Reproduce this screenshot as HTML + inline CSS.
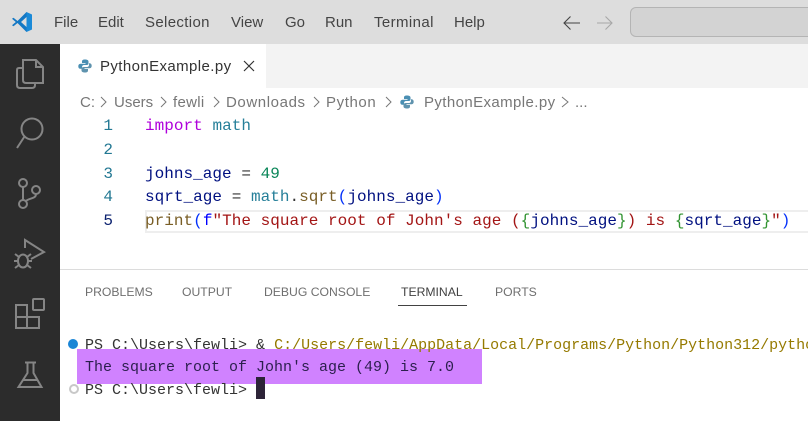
<!DOCTYPE html>
<html>
<head>
<meta charset="utf-8">
<style>
html,body{margin:0;padding:0;width:808px;height:421px;overflow:hidden;background:#fff}
div{position:absolute;white-space:pre}
.m{top:14px;font:15px/18px "Liberation Sans",sans-serif;color:#444}
.b{top:94px;font:15px/18px "Liberation Sans",sans-serif;color:#777}
.p{top:284px;font:12.2px/17px "Liberation Sans",sans-serif;color:#6f6f6f}
.c{left:145px;font:16px/24px "Liberation Mono",monospace;letter-spacing:.03px;color:#001080}
.n{width:32px;left:81px;text-align:right;font:16px/24px "Liberation Mono",monospace;color:#237893}
.t{left:85px;font:15px/22px "Liberation Mono",monospace;color:#333}
svg{position:absolute;overflow:visible}
</style>
</head>
<body>
<div style="left:0;top:0;width:808px;height:421px;overflow:hidden">
<div style="left:0;top:0;width:808px;height:44px;background:#dddddd"></div>
<svg style="left:11px;top:11px" width="22" height="22" viewBox="0 0 22 22"><path d="M15.500 1 L21 3.500 V18.500 L15.500 21 Z" fill="#1a8ad8"/><path d="M15.500 1 L6.500 10 L2.500 6.800 L1 7.800 L4.800 11 L1 14.200 L2.500 15.200 L6.500 12 L15.500 21 V16 L10 11 L15.500 6 Z" fill="#1478c4"/></svg>
<div class="m" style="left:54px">File</div>
<div class="m" style="left:98px">Edit</div>
<div class="m" style="left:145px;letter-spacing:.35px">Selection</div>
<div class="m" style="left:231px">View</div>
<div class="m" style="left:285px">Go</div>
<div class="m" style="left:325px">Run</div>
<div class="m" style="left:374px;letter-spacing:.4px">Terminal</div>
<div class="m" style="left:454px">Help</div>
<svg style="left:563px;top:14px" width="18" height="18" fill="none" stroke="#444" stroke-width="1.1"><path d="M1 9H17M7.500 2.500L1 9L7.500 15.500"/></svg>
<svg style="left:596px;top:14px" width="18" height="18" fill="none" stroke="#a8a8a8" stroke-width="1.1"><path d="M1 9H16M9.500 2.500L16 9L9.500 15.500"/></svg>
<div style="left:630px;top:7px;width:190px;height:28px;background:#d3d3d3;border:1px solid #b4b4b4;border-radius:6px"></div>

<div style="left:0;top:44px;width:60px;height:377px;background:#2c2c2c"></div>
<svg style="left:0;top:44px" width="60" height="377" fill="none" stroke="#858585" stroke-width="2">
<path d="M23 17V16H36L43 23V39H35"/><path d="M36 16V23H43"/><path d="M23 24H19Q17 24 17 26V41Q17 44 20 44H32Q35 44 35 41V39"/><path d="M23 16V36Q23 39 26 39H35"/>
<circle cx="32" cy="85" r="10.500"/><path d="M24.500 92.500L17 104"/>
<circle cx="23" cy="139" r="4"/><circle cx="23" cy="160" r="4"/><circle cx="36" cy="146" r="4"/><path d="M23 143V156M36 150C36 155 29 154 26 157"/>
<path d="M25 204V196L44 208L31 215"/><ellipse cx="23" cy="217" rx="5" ry="6.500"/><path d="M15 210l4 3M31 210l-4 3M14 217h4M32 217h-4M15 224l4-3M31 224l-4-3"/>
<path d="M16 261H27V273H39V284H16ZM16 273H27V284"/><rect x="33" y="255" width="11" height="11" rx="1"/>
<path d="M25 318.500H36M27.500 318V329L18.500 343H41.500L33.500 329V318M23 336H37"/>
</svg>

<div style="left:60px;top:44px;width:748px;height:44px;background:#f3f3f3"></div>
<div style="left:60px;top:44px;width:206px;height:44px;background:#fff"></div>
<svg style="left:78px;top:59px" width="14" height="14" viewBox="0 0 14 14"><path d="M7 .5C4.500.5 4 1.500 4 2.500V4H7.500V4.700H2.500C1 4.700 .3 5.800 .3 7.200S1 9.800 2.500 9.800H4V8C4 6.800 5 6 6 6H9C9.800 6 10.500 5.300 10.500 4.500V2.500C10.500 1.300 9.300.5 7 .5Z" fill="#4a8fb3"/><path d="M7 13.500C9.500 13.500 10 12.500 10 11.500V10H6.500V9.300H11.500C13 9.300 13.700 8.200 13.700 6.800S13 4.200 11.500 4.200H11V6C11 7.200 10 8 9 8H6C4.200 8 3.500 8.700 3.500 9.500V11.500C3.500 12.700 4.700 13.500 7 13.500Z" fill="#5f93ae"/></svg>
<div style="left:100px;top:58px;font:15px/18px 'Liberation Sans',sans-serif;letter-spacing:.4px;color:#333">PythonExample.py</div>
<svg style="left:243px;top:60px" width="12" height="12" fill="none" stroke="#333" stroke-width="1.2"><path d="M1 1L11 11M11 1L1 11"/></svg>

<div class="b" style="left:80px">C:</div>
<div class="b" style="left:114px">Users</div>
<div class="b" style="left:173px;letter-spacing:.3px">fewli</div>
<div class="b" style="left:226px;letter-spacing:.6px">Downloads</div>
<div class="b" style="left:326px;letter-spacing:.6px">Python</div>
<div class="b" style="left:424px;letter-spacing:.4px">PythonExample.py</div>
<div class="b" style="left:575px">...</div>
<svg style="left:0;top:0" width="808" height="120" fill="none" stroke="#777" stroke-width="1"><path d="M101 97L106 102L101 107M161 97L166 102L161 107M214 97L219 102L214 107M314 97L319 102L314 107M386 97L391 102L386 107M562 97L568 102L562 107"/></svg>
<svg style="left:400px;top:95px" width="14" height="14" viewBox="0 0 14 14"><path d="M7 .5C4.500.5 4 1.500 4 2.500V4H7.500V4.700H2.500C1 4.700 .3 5.800 .3 7.200S1 9.800 2.500 9.800H4V8C4 6.800 5 6 6 6H9C9.800 6 10.500 5.300 10.500 4.500V2.500C10.500 1.300 9.300.5 7 .5Z" fill="#4a8fb3"/><path d="M7 13.500C9.500 13.500 10 12.500 10 11.500V10H6.500V9.300H11.500C13 9.300 13.700 8.200 13.700 6.800S13 4.200 11.500 4.200H11V6C11 7.200 10 8 9 8H6C4.200 8 3.500 8.700 3.500 9.500V11.500C3.500 12.700 4.700 13.500 7 13.500Z" fill="#5f93ae"/></svg>

<div style="left:145px;top:210px;width:663px;height:19px;border:2px solid #eeeeee;border-right:0"></div>
<div class="n" style="top:114px">1</div>
<div class="n" style="top:138px">2</div>
<div class="n" style="top:162px">3</div>
<div class="n" style="top:185px">4</div>
<div class="n" style="top:209px;color:#0b216f">5</div>
<div class="c" style="top:114px"><span style="color:#af00db">import</span> <span style="color:#267f99">math</span></div>
<div class="c" style="top:162px">johns_age <span style="color:#333">=</span> <span style="color:#098658">49</span></div>
<div class="c" style="top:185px">sqrt_age <span style="color:#333">=</span> <span style="color:#267f99">math</span><span style="color:#333">.</span><span style="color:#795e26">sqrt</span><span style="color:#0431fa">(</span>johns_age<span style="color:#0431fa">)</span></div>
<div class="c" style="top:209px"><span style="color:#795e26">print</span><span style="color:#0431fa">(</span><span style="color:#0000ff">f</span><span style="color:#a31515">"The square root of John's age (</span><span style="color:#319331">{</span>johns_age<span style="color:#319331">}</span><span style="color:#a31515">) is </span><span style="color:#319331">{</span>sqrt_age<span style="color:#319331">}</span><span style="color:#a31515">"</span><span style="color:#0431fa">)</span></div>

<div style="left:60px;top:269px;width:748px;height:1px;background:#dcdcdc"></div>
<div class="p" style="left:85px">PROBLEMS</div>
<div class="p" style="left:182px">OUTPUT</div>
<div class="p" style="left:264px">DEBUG CONSOLE</div>
<div class="p" style="left:401px;color:#424242">TERMINAL</div>
<div class="p" style="left:495px">PORTS</div>
<div style="left:398px;top:305px;width:69px;height:1px;background:#424242"></div>

<div style="left:77px;top:349px;width:405px;height:35px;background:#d082ff"></div>
<div style="left:68px;top:339px;width:10px;height:10px;border-radius:50%;background:#1a85d6"></div>
<div style="left:69px;top:384px;width:6px;height:6px;border-radius:50%;border:2px solid #c8c8c8"></div>
<div class="t" style="top:335px">PS C:\Users\fewli&gt; <span style="color:#333">&amp;</span> <span style="color:#957a00">C:/Users/fewli/AppData/Local/Programs/Python/Python312/python.exe</span></div>
<div class="t" style="top:357px;color:#2b1f4d">The square root of John's age (49) is 7.0</div>
<div class="t" style="top:380px">PS C:\Users\fewli&gt;</div>
<div style="left:256px;top:377px;width:9px;height:22px;background:#2d2438"></div>
</div>
</body>
</html>
